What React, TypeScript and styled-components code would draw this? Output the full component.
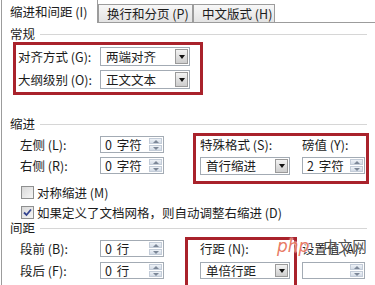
import React from 'react';
import styled, { createGlobalStyle } from 'styled-components';

const GlobalStyle = createGlobalStyle`
  html, body {
    margin: 0;
    padding: 0;
    background: #fff;
  }
`;

const Dialog = styled.div`
  position: relative;
  width: 375px;
  height: 285px;
  overflow: hidden;
  background: #fff;
  color: #1c1c1c;
  font-family: "Noto Sans CJK SC", "Liberation Sans", sans-serif;
  font-size: 12.5px;
  line-height: 14px;
`;

const TabBar = styled.div`
  display: flex;
  align-items: flex-end;
  height: 22px;
  padding-left: 1px;
`;

const Tab = styled.div<{ $active?: boolean; $w: number }>`
  box-sizing: border-box;
  position: relative;
  z-index: ${(p) => (p.$active ? 1 : 0)};
  display: flex;
  align-items: center;
  width: ${(p) => p.$w}px;
  height: ${(p) => (p.$active ? 23 : 18)}px;
  margin-bottom: ${(p) => (p.$active ? -1 : 0)}px;
  padding-left: 8px;
  border: 1px solid #9c9c9c;
  border-top: ${(p) => (p.$active ? 'none' : '1px solid #9c9c9c')};
  border-bottom: none;
  background: ${(p) => (p.$active ? '#fff' : 'linear-gradient(#f7f7f7, #e3e3e3)')};
  white-space: nowrap;
`;

const Panel = styled.div`
  margin-left: 1px;
  height: 300px;
  border-top: 1px solid #9c9c9c;
  border-left: 1px solid #9c9c9c;
  display: flex;
  flex-direction: column;
`;

const Heading = styled.div<{ $top: number }>`
  display: flex;
  align-items: center;
  height: 14px;
  margin-top: ${(p) => p.$top}px;
  padding-left: 8px;
  padding-right: 8px;

  &::after {
    content: '';
    flex: 1;
    height: 1px;
    margin-left: 5px;
    background: #d6d6d6;
  }
`;

const Highlight = styled.div<{ $left: number; $top: number; $w: number; $h: number }>`
  box-sizing: border-box;
  flex-shrink: 0;
  width: ${(p) => p.$w}px;
  height: ${(p) => p.$h}px;
  margin-left: ${(p) => p.$left}px;
  margin-top: ${(p) => p.$top}px;
  border: 3px solid #a9222b;
`;

const GeneralFields = styled.div`
  display: flex;
  flex-direction: column;
  gap: 4px;
  padding: 2px 0 0 2px;
`;

const SectionBody = styled.div`
  display: flex;
  align-items: flex-start;
`;

const FieldColumn = styled.div<{ $top: number; $gap: number }>`
  display: flex;
  flex-direction: column;
  gap: ${(p) => p.$gap}px;
  margin-left: 18px;
  margin-top: ${(p) => p.$top}px;
`;

const Row = styled.div`
  display: flex;
  align-items: center;
`;

const Label = styled.span<{ $w: number }>`
  width: ${(p) => p.$w}px;
  white-space: nowrap;
`;

const HighlightInner = styled.div<{ $left: number }>`
  display: flex;
  padding: 2px 0 0 ${(p) => p.$left}px;
`;

const StackedField = styled.div<{ $left: number; $top?: number; $gap: number }>`
  display: flex;
  flex-direction: column;
  gap: ${(p) => p.$gap}px;
  margin-left: ${(p) => p.$left}px;
  margin-top: ${(p) => p.$top ?? 0}px;
  white-space: nowrap;
`;

const Select = styled.div<{ $w: number; $h: number }>`
  box-sizing: border-box;
  display: flex;
  align-items: center;
  width: ${(p) => p.$w}px;
  height: ${(p) => p.$h}px;
  padding: 1px 1px 1px 5px;
  border: 1px solid #a3abb4;
  background: #fff;
`;

const SelectText = styled.span`
  flex: 1;
  white-space: nowrap;
`;

const DropButton = styled.span`
  box-sizing: border-box;
  display: flex;
  align-items: center;
  justify-content: center;
  width: 13px;
  height: 100%;
  border: 1px solid #9a9a9a;
  background: linear-gradient(#f3f3f3, #cdcdcd);

  &::before {
    content: '';
    border-top: 4px solid #111;
    border-left: 3.5px solid transparent;
    border-right: 3.5px solid transparent;
  }
`;

const Spin = styled.div<{ $w: number; $h: number }>`
  box-sizing: border-box;
  display: flex;
  align-items: center;
  width: ${(p) => p.$w}px;
  height: ${(p) => p.$h}px;
  padding: 1px 1px 1px 4px;
  border: 1px solid #a3abb4;
  background: #fff;
`;

const SpinValue = styled.span`
  flex: 1;
  white-space: nowrap;
  word-spacing: 2px;
`;

const Spinner = styled.span`
  display: flex;
  flex-direction: column;
  width: 13px;
  height: 100%;
  gap: 1px;
`;

const SpinArrow = styled.span<{ $up?: boolean }>`
  flex: 1;
  display: flex;
  align-items: center;
  justify-content: center;
  background: linear-gradient(#eef2f7, #d3dbe6);
  border: 1px solid #c3ccd8;

  &::before {
    content: '';
    border-left: 3px solid transparent;
    border-right: 3px solid transparent;
    ${(p) => (p.$up ? 'border-bottom: 3px solid #7c8797;' : 'border-top: 3px solid #7c8797;')}
  }
`;

const CheckRow = styled.div<{ $top: number }>`
  display: flex;
  align-items: center;
  gap: 3px;
  height: 13px;
  margin-top: ${(p) => p.$top}px;
  margin-left: 19px;
  white-space: nowrap;
`;

const CheckBox = styled.span`
  box-sizing: border-box;
  display: flex;
  align-items: center;
  justify-content: center;
  width: 13px;
  height: 13px;
  border: 1px solid #8e8f8f;
  background: linear-gradient(135deg, #d8d8d8, #f6f6f6);
`;

const Watermark = styled.div`
  position: absolute;
  left: 277px;
  top: 239px;
  display: flex;
  align-items: center;
  gap: 14px;
  pointer-events: none;
`;

const WatermarkPhp = styled.span`
  font-family: "DejaVu Sans", sans-serif;
  font-size: 17px;
  font-style: italic;
  color: rgba(226, 88, 60, 0.8);
  text-shadow: 0 0 2px #fff, 0 0 2px #fff;
`;

const WatermarkName = styled.span`
  font-size: 14.5px;
  color: rgba(40, 40, 40, 0.82);
  text-shadow: 0 0 1px #fff;
`;

function Dropdown({ w, h, value }: { w: number; h: number; value: string }) {
  return (
    <Select $w={w} $h={h}>
      <SelectText>{value}</SelectText>
      <DropButton />
    </Select>
  );
}

function SpinBox({ w, h, value }: { w: number; h: number; value: string }) {
  return (
    <Spin $w={w} $h={h}>
      <SpinValue>{value}</SpinValue>
      <Spinner>
        <SpinArrow $up />
        <SpinArrow />
      </Spinner>
    </Spin>
  );
}

export default function App() {
  return (
    <Dialog>
      <GlobalStyle />
      <TabBar>
        <Tab $active $w={97}>缩进和间距 (I)</Tab>
        <Tab $w={95}>换行和分页 (P)</Tab>
        <Tab $w={82}>中文版式 (H)</Tab>
      </TabBar>

      <Panel>
        <Heading $top={4}>常规</Heading>
        <Highlight $left={11} $top={1} $w={190} $h={53}>
          <GeneralFields>
            <Row>
              <Label $w={82}>对齐方式 (G):</Label>
              <Dropdown w={90} h={19} value='两端对齐' />
            </Row>
            <Row>
              <Label $w={82}>大纲级别 (O):</Label>
              <Dropdown w={90} h={19} value='正文文本' />
            </Row>
          </GeneralFields>
        </Highlight>

        <Heading $top={22}>缩进</Heading>
        <SectionBody>
          <FieldColumn $top={5} $gap={4}>
            <Row>
              <Label $w={80}>左侧 (L):</Label>
              <SpinBox w={64} h={17} value='0 字符' />
            </Row>
            <Row>
              <Label $w={80}>右侧 (R):</Label>
              <SpinBox w={64} h={17} value='0 字符' />
            </Row>
          </FieldColumn>
          <Highlight $left={29} $top={2} $w={176} $h={51}>
            <HighlightInner $left={4}>
              <StackedField $left={0} $gap={5}>
                <span>特殊格式 (S):</span>
                <Dropdown w={90} h={18} value='首行缩进' />
              </StackedField>
              <StackedField $left={12} $gap={5}>
                <span>磅值 (Y):</span>
                <SpinBox w={63} h={17} value='2 字符' />
              </StackedField>
            </HighlightInner>
          </Highlight>
        </SectionBody>

        <CheckRow $top={2}>
          <CheckBox />
          对称缩进 (M)
        </CheckRow>
        <CheckRow $top={7}>
          <CheckBox>
            <svg width='9' height='9' viewBox='0 0 9 9'>
              <path d='M1 4.5 L3.5 7 L8 1.5' fill='none' stroke='#34448f' strokeWidth='1.8' />
            </svg>
          </CheckBox>
          如果定义了文档网格，则自动调整右缩进 (D)
        </CheckRow>

        <Heading $top={2}>间距</Heading>
        <SectionBody>
          <FieldColumn $top={5} $gap={5}>
            <Row>
              <Label $w={80}>段前 (B):</Label>
              <SpinBox w={64} h={17} value='0 行' />
            </Row>
            <Row>
              <Label $w={80}>段后 (F):</Label>
              <SpinBox w={64} h={17} value='0 行' />
            </Row>
          </FieldColumn>
          <Highlight $left={21} $top={2} $w={112} $h={60}>
            <HighlightInner $left={12}>
              <StackedField $left={0} $gap={6}>
                <span>行距 (N):</span>
                <Dropdown w={90} h={17} value='单倍行距' />
              </StackedField>
            </HighlightInner>
          </Highlight>
          <StackedField $left={5} $top={7} $gap={6}>
            <span>设置值 (A):</span>
            <SpinBox w={63} h={17} value='' />
          </StackedField>
        </SectionBody>
      </Panel>

      <Watermark>
        <WatermarkPhp>php</WatermarkPhp>
        <WatermarkName>中文网</WatermarkName>
      </Watermark>
    </Dialog>
  );
}
